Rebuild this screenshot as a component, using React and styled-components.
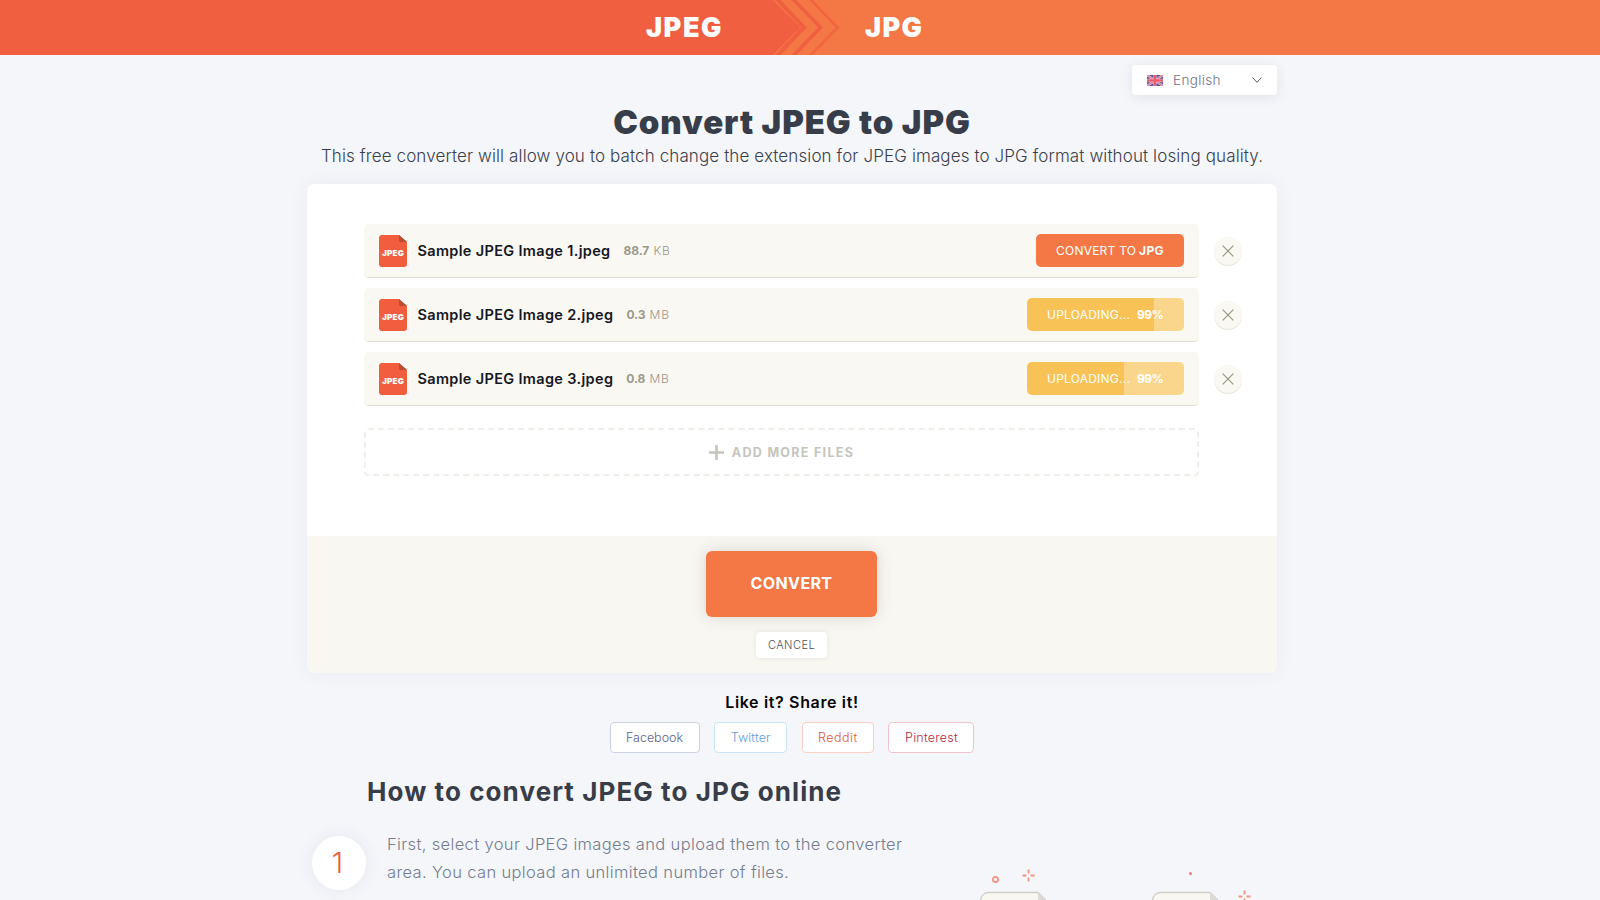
import React from 'react';
import styled, { createGlobalStyle, css } from 'styled-components';

const GlobalStyle = createGlobalStyle`
  * { box-sizing: border-box; }
  html, body { margin: 0; background: #f5f6fa; overflow: hidden; }
  body { font-family: Inter, "Open Sans", sans-serif; color: #363b47; }
  button { font-family: inherit; padding: 0; border: 0; cursor: pointer; }
`;

const Page = styled.div`
  height: 900px;
  overflow: hidden;
`;

const Header = styled.header`
  height: 55px;
  display: grid;
  grid-template-columns: 773px 68px 1fr;
  background: #f37846;
  color: #fff;
  font-size: 27px;
  font-weight: 900;
  line-height: 54px;
`;
const FromFormat = styled.div`
  height: 55px;
  padding: 1px 50px 0 0;
  background: #f05f3f;
  text-align: right;
  letter-spacing: 1.6px;
`;
const ToFormat = styled.div`
  padding: 1px 0 0 24px;
  letter-spacing: 1.4px;
`;
const Arrows = styled.svg`
  display: block;
`;

const Container = styled.main`
  width: 970px;
  margin-left: 307px;
  display: flex;
  flex-direction: column;
`;

const LanguageSelect = styled.button`
  align-self: flex-end;
  margin-top: 10px;
  width: 145px;
  height: 30px;
  padding: 0 15px;
  display: flex;
  align-items: center;
  background: #fff;
  border-radius: 4px;
  box-shadow: 0 2px 12px rgba(50, 50, 80, 0.1);
  color: #6c7289;
  font-size: 13.5px;
  font-weight: 350;
  letter-spacing: 0.35px;
`;
const LanguageName = styled.span`
  flex: 1;
  text-align: left;
  padding-left: 10px;
`;

const Title = styled.h1`
  margin: 7px 0 0;
  height: 41px;
  line-height: 41px;
  text-align: center;
  font-size: 33px;
  font-weight: 900;
  letter-spacing: 0.9px;
  color: #383d4a;
`;
const Subtitle = styled.p`
  margin: 0;
  height: 41px;
  line-height: 26px;
  text-align: center;
  white-space: nowrap;
  font-size: 17px;
  font-weight: 300;
  letter-spacing: 0.112px;
  color: #3a3f4c;
`;

const Card = styled.section`
  height: 489px;
  border-radius: 8px;
  background: #fff;
  overflow: hidden;
  display: flex;
  flex-direction: column;
`;
const CardShadow = styled.div`
  border-radius: 8px;
  box-shadow: 0 0 20px rgba(60, 60, 110, 0.06);
`;
const FileArea = styled.div`
  height: 352px;
  padding: 40px 35px 0 57px;
`;
const FileList = styled.ul`
  list-style: none;
  margin: 0;
  padding: 0;
  display: flex;
  flex-direction: column;
  gap: 10px;
`;
const FileItem = styled.li`
  display: flex;
  align-items: center;
  justify-content: space-between;
`;
const FileRow = styled.div`
  width: 835px;
  height: 54px;
  padding: 0 15px;
  display: flex;
  align-items: center;
  background: #f9f8f3;
  border-radius: 5px;
  border-bottom: 1px solid #deddd0;
`;
const FileName = styled.span`
  margin-left: 10.5px;
  font-size: 14.5px;
  font-weight: 600;
  letter-spacing: 0.34px;
  color: #16171f;
`;
const FileSize = styled.span`
  flex: 1;
  margin-left: 13px;
  font-size: 12px;
  font-weight: 350;
  letter-spacing: 0.8px;
  color: #9c998a;
  b { font-weight: 700; letter-spacing: -0.1px; }
`;
const ActionButton = styled.button`
  height: 33px;
  border-radius: 5px;
  display: flex;
  align-items: center;
  justify-content: space-between;
  padding: 0 20px;
  color: #fff;
  font-size: 12px;
  font-weight: 400;
  letter-spacing: 0.23px;
  b { font-weight: 700; }
  ${({ $progress }) =>
    $progress
      ? css`
          width: 157px;
          padding-right: 21px;
          background: linear-gradient(90deg, #f8c256 ${$progress}px, #fad68c ${$progress}px);
          b { letter-spacing: -0.6px; }
        `
      : css`
          width: 148px;
          background: #f37846;
          b { letter-spacing: 0.4px; }
        `}
`;
const RemoveButton = styled.button`
  width: 28px;
  height: 28px;
  margin-bottom: 1px;
  border-radius: 50%;
  background: #f9f8f3;
  box-shadow: 0 1px 0 #e4e2d8;
  display: grid;
  place-items: center;
`;
const AddMore = styled.button`
  width: 835px;
  height: 48px;
  margin-top: 22px;
  display: flex;
  align-items: center;
  justify-content: center;
  gap: 8px;
  background: #fff;
  border: 2px dashed #eeede8;
  border-radius: 4px;
  color: #c6c5bd;
  font-size: 12.5px;
  font-weight: 700;
  letter-spacing: 1.3px;
`;

const Footer = styled.div`
  flex: 1;
  background: #f8f7f2;
  display: flex;
  flex-direction: column;
  align-items: center;
  padding: 15px 1px 0 0;
`;
const ConvertButton = styled.button`
  width: 171px;
  height: 66px;
  padding-bottom: 2px;
  border-radius: 6px;
  background: #f37846;
  box-shadow: 0 0 16px rgba(60, 60, 40, 0.17);
  color: #fff;
  font-size: 16px;
  font-weight: 700;
  letter-spacing: 0.38px;
`;
const CancelButton = styled.button`
  width: 71px;
  height: 26px;
  margin-top: 15px;
  border-radius: 4px;
  background: #fff;
  box-shadow: 0 0 5px rgba(60, 60, 40, 0.1);
  color: #4a4f5a;
  font-size: 11px;
  font-weight: 350;
  letter-spacing: 0.48px;
`;

const ShareTitle = styled.h3`
  margin: 17px 0 0;
  height: 32px;
  line-height: 25px;
  text-align: center;
  font-size: 16px;
  font-weight: 600;
  letter-spacing: 0.65px;
  color: #050506;
`;
const ShareList = styled.div`
  display: flex;
  justify-content: center;
  gap: 14.67px;
`;
const ShareButton = styled.button`
  width: ${({ $width }) => $width}px;
  height: 31px;
  background: #fff;
  border: 1px solid ${({ $line }) => $line};
  border-radius: 4px;
  color: ${({ $color }) => $color};
  font-size: 12.5px;
  font-weight: 360;
  letter-spacing: ${({ $spacing }) => $spacing}px;
`;

const HowTo = styled.section`
  display: grid;
  grid-template-columns: 80px 560px 1fr;
`;
const HowToTitle = styled.h2`
  margin: 23px 0 0 60px;
  height: 52px;
  line-height: 31px;
  font-size: 26px;
  font-weight: 650;
  letter-spacing: 1.08px;
  color: #383d48;
  white-space: nowrap;
`;
const StepNumber = styled.div`
  width: 54px;
  height: 54px;
  margin: 8px 0 0 5px;
  padding-right: 3px;
  border-radius: 50%;
  background: #fff;
  box-shadow: 0 0 18px rgba(60, 60, 110, 0.08);
  text-align: center;
  line-height: 53px;
  font-size: 29px;
  font-weight: 300;
  color: #ef5d3d;
`;
const StepText = styled.p`
  margin: 2px 0 0;
  line-height: 28px;
  white-space: nowrap;
  font-size: 16.5px;
  font-weight: 300;
  letter-spacing: 0.355px;
  color: #747c8f;
`;
const Illustration = styled.svg`
  margin-top: 40px;
  display: block;
`;

const FlagIcon = () => (
  <svg width="16" height="11" viewBox="0 0 16 11">
    <path fill="#54539c" d="M0 0h16v11H0z" />
    <path d="M0 0l16 11M16 0L0 11" stroke="#dfb4cf" strokeWidth="2.4" />
    <path d="M0 0l16 11M16 0L0 11" stroke="#e0677c" strokeWidth="0.8" />
    <path d="M8 0v11M0 5.5h16" stroke="#e3a3bb" strokeWidth="3.4" />
    <path d="M8 0v11M0 5.5h16" stroke="#ee5b66" strokeWidth="2" />
  </svg>
);

const FileIconFrame = styled.div`
  width: 28px;
  height: 32px;
  display: grid;
  & > * { grid-area: 1 / 1; }
`;
const FileIconLabel = styled.span`
  align-self: center;
  padding-top: 4px;
  text-align: center;
  color: #fff;
  font-size: 8px;
  font-weight: 900;
  line-height: 10px;
  letter-spacing: 0.3px;
`;
const FileIcon = () => (
  <FileIconFrame>
    <svg width="28" height="32" viewBox="0 0 28 32">
      <path fill="#f15e3e" d="M3 0h17l8 7v22a3 3 0 0 1-3 3H3a3 3 0 0 1-3-3V3a3 3 0 0 1 3-3z" />
      <path fill="#bb4b34" d="M20 0l8 7h-6.500a1.500 1.500 0 0 1-1.500-1.500z" />
    </svg>
    <FileIconLabel>JPEG</FileIconLabel>
  </FileIconFrame>
);

const files = [
  { name: 'Sample JPEG Image 1.jpeg', size: '88.7', unit: 'KB' },
  { name: 'Sample JPEG Image 2.jpeg', size: '0.3', unit: 'MB', progress: 127 },
  { name: 'Sample JPEG Image 3.jpeg', size: '0.8', unit: 'MB', progress: 97 },
];

const networks = [
  { name: 'Facebook', width: 90, color: '#59618e', line: '#ccd3e3', spacing: 0 },
  { name: 'Twitter', width: 73, color: '#5f9bdc', line: '#c8e5f5', spacing: 0.12 },
  { name: 'Reddit', width: 72, color: '#d9573c', line: '#fbd0c4', spacing: 0.48 },
  { name: 'Pinterest', width: 86, color: '#b62b45', line: '#f3c3cd', spacing: 0.23 },
];

const Sparkle = ({ x, y }) => (
  <path
    d={`M${x} ${y - 6}v4M${x} ${y + 2}v4M${x - 6} ${y}h4M${x + 2} ${y}h4`}
    stroke="#f3947f"
    strokeWidth="1.8"
  />
);
const Sheet = ({ x }) => (
  <g transform={`translate(${x} 0)`}>
    <path d="M.5 50V32.500a8 8 0 0 1 8-8H58l9 9V50" fill="#f8f7f2" stroke="#cfcdc8" strokeWidth="1.300" />
    <path d="M58 24.500V34h9z" fill="#dddbd7" />
  </g>
);

export default function App() {
  return (
    <Page>
      <GlobalStyle />
      <Header>
        <FromFormat>JPEG</FromFormat>
        <Arrows width="68" height="55" viewBox="0 0 68 55">
          <path fill="#f05f3f" d="M0 0l28 27.500L0 55z" />
          <path fill="none" stroke="#f05f3f" strokeWidth="4" d="M3 -2l28 29.500L3 57" />
          <path fill="none" stroke="#f37846" strokeOpacity="0.7" strokeWidth="0.900" d="M-1 -1l28.500 28.500L-1 56" />
          <path fill="none" stroke="#f05f3f" strokeWidth="3.600" d="M19 -2l28.500 29.500L19 57" />
          <path fill="none" stroke="#f05f3f" strokeOpacity="0.75" strokeWidth="2.600" d="M36 -2l28.500 29.500L36 57" />
        </Arrows>
        <ToFormat>JPG</ToFormat>
      </Header>

      <Container>
        <LanguageSelect>
          <FlagIcon />
          <LanguageName>English</LanguageName>
          <svg width="10" height="6" viewBox="0 0 10 6">
            <path d="M.5 .5L5 5.300 9.500 .5" fill="none" stroke="#555b6b" strokeWidth="1" />
          </svg>
        </LanguageSelect>
        <Title>Convert JPEG to JPG</Title>
        <Subtitle>
          This free converter will allow you to batch change the extension for JPEG images to JPG format without losing quality.
        </Subtitle>

        <CardShadow>
          <Card>
            <FileArea>
              <FileList>
                {files.map((file) => (
                  <FileItem key={file.name}>
                    <FileRow>
                      <FileIcon />
                      <FileName>{file.name}</FileName>
                      <FileSize>
                        <b>{file.size}</b> {file.unit}
                      </FileSize>
                      <ActionButton $progress={file.progress}>
                        <span>{file.progress ? 'UPLOADING...' : 'CONVERT TO'}</span>
                        <b>{file.progress ? '99%' : 'JPG'}</b>
                      </ActionButton>
                    </FileRow>
                    <RemoveButton aria-label="Remove">
                      <svg width="12" height="12" viewBox="0 0 12 12">
                        <path d="M.7 .7l10.600 10.600M11.300 .7L.7 11.300" stroke="#999687" strokeWidth="1.200" />
                      </svg>
                    </RemoveButton>
                  </FileItem>
                ))}
              </FileList>
              <AddMore>
                <svg width="15" height="15" viewBox="0 0 15 15">
                  <path d="M7.500 0v15M0 7.500h15" stroke="#c6c5bd" strokeWidth="2.600" />
                </svg>
                <span>ADD MORE FILES</span>
              </AddMore>
            </FileArea>
            <Footer>
              <ConvertButton>CONVERT</ConvertButton>
              <CancelButton>CANCEL</CancelButton>
            </Footer>
          </Card>
        </CardShadow>

        <ShareTitle>Like it? Share it!</ShareTitle>
        <ShareList>
          {networks.map((n) => (
            <ShareButton key={n.name} $width={n.width} $color={n.color} $line={n.line} $spacing={n.spacing}>
              {n.name}
            </ShareButton>
          ))}
        </ShareList>

        <HowToTitle>How to convert JPEG to JPG online</HowToTitle>
        <HowTo>
          <StepNumber>1</StepNumber>
          <StepText>
            First, select your JPEG images and upload them to the converter
            <br />
            area. You can upload an unlimited number of files.
          </StepText>
          <Illustration width="320" height="60" viewBox="0 0 320 60">
            <circle cx="48.500" cy="11.500" r="2.600" fill="none" stroke="#f3947f" strokeWidth="1.800" />
            <Sparkle x={81.5} y={7.5} />
            <circle cx="243.500" cy="5.500" r="1.500" fill="#f3806a" />
            <Sparkle x={297.500} y={28.5} />
            <Sheet x={33} />
            <Sheet x={205} />
          </Illustration>
        </HowTo>
      </Container>
    </Page>
  );
}
